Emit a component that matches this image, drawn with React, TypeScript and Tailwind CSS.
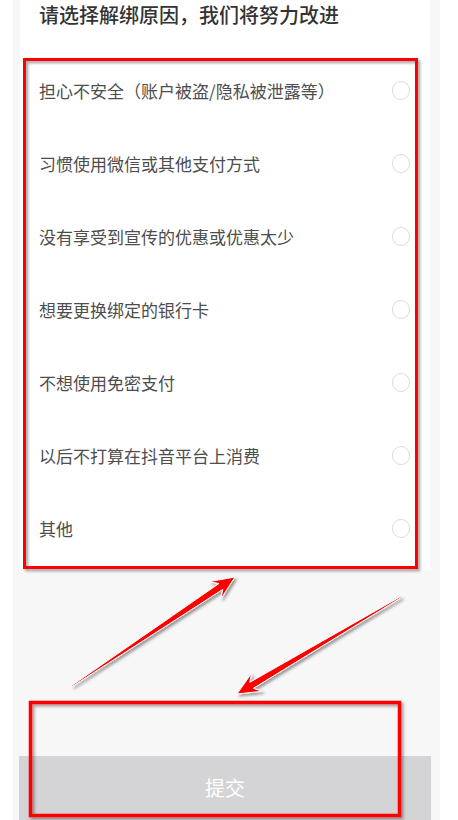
const reasons = [
  '担心不安全（账户被盗/隐私被泄露等）',
  '习惯使用微信或其他支付方式',
  '没有享受到宣传的优惠或优惠太少',
  '想要更换绑定的银行卡',
  '不想使用免密支付',
  '以后不打算在抖音平台上消费',
  '其他',
]

const font = { fontFamily: '"Noto Sans CJK SC", "Noto Sans", sans-serif' }

function ReasonRow({ label }: { label: string }) {
  return (
    <div className="flex h-[73px] items-center justify-between">
      <span className="text-[17px] leading-none text-[#4d4d4d]">{label}</span>
      <span className="h-[19px] w-[18px] rounded-full border border-[#dcdcdc]" />
    </div>
  )
}

// red frames + arrows drawn on top of the form
function Markup() {
  return (
    <svg
      className="pointer-events-none absolute inset-0"
      width={458}
      height={820}
      viewBox="0 0 458 820"
    >
      <defs>
        <filter id="shade" x="-10%" y="-10%" width="120%" height="120%">
          <feDropShadow dx="2" dy="2" stdDeviation="1.5" floodColor="#000" floodOpacity="0.4" />
        </filter>
      </defs>
      <g filter="url(#shade)">
        <rect x={24.5} y={59.5} width={392} height={508} fill="none" stroke="#ff0000" strokeWidth={3} />
        <rect x={30.5} y={702.5} width={369} height={113} fill="none" stroke="#ff0000" strokeWidth={3.5} />
        <polygon
          points="235,577 220.8,599 222.8,589.4 72.3,686.4 71.7,685.6 218.9,583.6 209.2,581.6"
          fill="#ff0000"
          stroke="#fff"
          strokeWidth={1}
          strokeLinejoin="round"
        />
        <polygon
          points="237,694 262.1,691.3 253.4,688.3 401.3,597.5 400.7,596.5 249.8,682.3 251.5,673.3"
          fill="#ff0000"
          stroke="#fff"
          strokeWidth={1}
          strokeLinejoin="round"
        />
      </g>
    </svg>
  )
}

export default function App() {
  return (
    <div className="relative h-[820px] w-[458px] overflow-hidden bg-white" style={font}>
      <div className="ml-[13px] flex h-full w-[427px] flex-col bg-[#f7f7f7]">
        <div className="ml-[7px] h-[570px] w-[410px] bg-white pl-[19px] pr-[20px]">
          <h1 className="text-[20px] leading-[30px] font-medium text-[#333]">
            请选择解绑原因，我们将努力改进
          </h1>
          <div className="mt-[24px]">
            {reasons.map((r) => (
              <ReasonRow key={r} label={r} />
            ))}
          </div>
        </div>
        <button
          type="button"
          className="mt-auto ml-[6px] flex h-[64px] w-[412px] items-center justify-center bg-[#d4d4d6] text-[20px] text-white"
        >
          提交
        </button>
      </div>
      <Markup />
    </div>
  )
}
